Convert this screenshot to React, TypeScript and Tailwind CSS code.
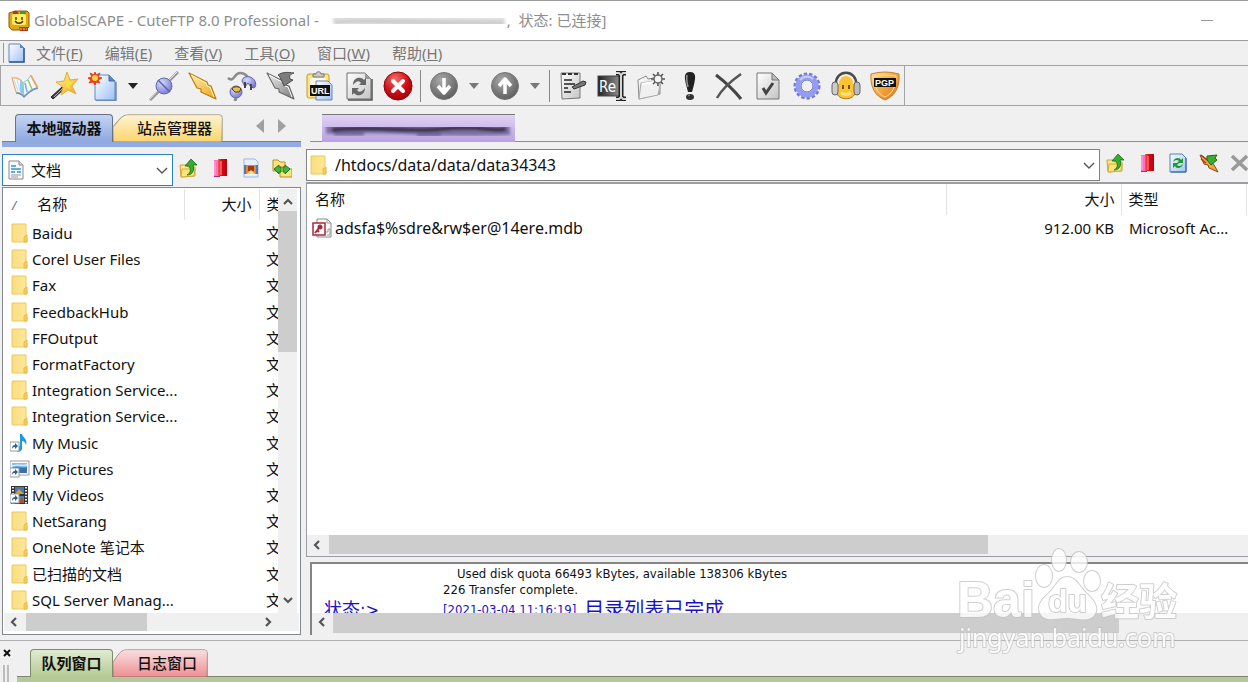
import React from 'react';

const toolbarMain = ['book', 'wand', 'newdoc'];
const toolbarLinks = ['connect', 'bolt', 'plug', 'boltoff', 'url', 'refresh', 'stop'];
const toolbarTools = ['edit', 'rename', 'newfolder', 'bang', 'cross', 'check', 'gear', 'headset', 'pgp'];

const labels: Record<string, string> = {
  book: 'Site manager', wand: 'Wizard', newdoc: 'New', connect: 'Connect', bolt: 'Quick connect',
  plug: 'Reconnect', boltoff: 'Disconnect', url: 'Paste URL', refresh: 'Refresh', stop: 'Stop',
  down: 'Download', up: 'Upload', edit: 'Edit', rename: 'Rename', newfolder: 'New folder',
  bang: 'Execute', cross: 'Delete', check: 'Properties', gear: 'Options', headset: 'Support', pgp: 'PGP',
};

const menus = [
  ['文件', 'F'], ['编辑', 'E'], ['查看', 'V'], ['工具', 'O'], ['窗口', 'W'], ['帮助', 'H'],
];

const localFiles = [
  { name: 'Baidu', icon: 'folder' },
  { name: 'Corel User Files', icon: 'folder' },
  { name: 'Fax', icon: 'folder' },
  { name: 'FeedbackHub', icon: 'folder' },
  { name: 'FFOutput', icon: 'folder' },
  { name: 'FormatFactory', icon: 'folder' },
  { name: 'Integration Service...', icon: 'folder' },
  { name: 'Integration Service...', icon: 'folder' },
  { name: 'My Music', icon: 'music' },
  { name: 'My Pictures', icon: 'pictures' },
  { name: 'My Videos', icon: 'videos' },
  { name: 'NetSarang', icon: 'folder' },
  { name: 'OneNote 笔记本', icon: 'folder' },
  { name: '已扫描的文档', icon: 'folder' },
  { name: 'SQL Server Manag...', icon: 'folder' },
];

// Shared gradients, referenced by id from every icon
const Defs = () => (
  <svg className="absolute w-0 h-0" aria-hidden="true">
    <defs>
      <linearGradient id="page" x1="0" y1="0" x2="1" y2="1">
        <stop offset="0" stopColor="#fff" /><stop offset="1" stopColor="#9cc0f5" />
      </linearGradient>
      <linearGradient id="greypage" x1="0" y1="0" x2="1" y2="1">
        <stop offset="0" stopColor="#fff" /><stop offset="1" stopColor="#c4c4c4" />
      </linearGradient>
      <linearGradient id="gold" x1="0" y1="0" x2="1" y2="1">
        <stop offset="0" stopColor="#fff3a8" /><stop offset="1" stopColor="#f0a21c" />
      </linearGradient>
      <linearGradient id="steel" x1="0" y1="0" x2="1" y2="1">
        <stop offset="0" stopColor="#f4f4f4" /><stop offset="1" stopColor="#777" />
      </linearGradient>
      <linearGradient id="dark" x1="0" y1="0" x2="1" y2="0">
        <stop offset="0" stopColor="#222" /><stop offset="1" stopColor="#999" />
      </linearGradient>
      <radialGradient id="ball" cx="0.4" cy="0.3" r="0.8">
        <stop offset="0" stopColor="#aaa" /><stop offset="1" stopColor="#555" />
      </radialGradient>
      <radialGradient id="red" cx="0.4" cy="0.25" r="0.8">
        <stop offset="0" stopColor="#f46a6a" /><stop offset="0.6" stopColor="#cc0c14" /><stop offset="1" stopColor="#9a0008" />
      </radialGradient>
      <radialGradient id="violet" cx="0.35" cy="0.3" r="0.8">
        <stop offset="0" stopColor="#d8dbfb" /><stop offset="1" stopColor="#7074cf" />
      </radialGradient>
      <linearGradient id="shield" x1="0" y1="0" x2="1" y2="1">
        <stop offset="0" stopColor="#ffe0a0" /><stop offset="0.5" stopColor="#f5a63c" /><stop offset="1" stopColor="#d9701c" />
      </linearGradient>
      <linearGradient id="crimson" x1="0" y1="0" x2="1" y2="0">
        <stop offset="0" stopColor="#ff5a50" /><stop offset="0.4" stopColor="#d80a18" /><stop offset="1" stopColor="#b80010" />
      </linearGradient>
      <linearGradient id="folderfill" x1="0" y1="0" x2="1" y2="0">
        <stop offset="0" stopColor="#f9dd83" /><stop offset="1" stopColor="#ffe899" />
      </linearGradient>
      <filter id="soft"><feGaussianBlur stdDeviation="1.6" /></filter>
    </defs>
  </svg>
);

const toolIcons: Record<string, React.ReactNode> = {
  book: (
    <>
      <path d="M2 7Q9 6 13 12l1 13Q10 21 6 21z" fill="#fff" stroke="#f0a860" strokeWidth="1.2" />
      <path d="M13 12Q19 9 21 4l7 12Q20 18 14 25z" fill="#f4faff" stroke="#9fb8d0" />
      <path d="m10 9 3 3 1 12-4-3z" fill="#8cc9ef" />
      <path d="m4 9 4 11M7 9l3 11" stroke="#b9dff6" strokeWidth="1.2" />
      <path d="m21 5 6 11" stroke="#f0a860" strokeWidth="1.6" />
      <path d="m18 9 4 9" stroke="#8dce6c" strokeWidth="1.5" />
      <path d="m15 12 2 9" stroke="#6cb3e4" strokeWidth="1.5" />
      <path d="M6 22q5 0 8 4 6-7 14-9" fill="none" stroke="#6f93bd" strokeWidth="1.3" />
    </>
  ),
  wand: (
    <>
      <path d="m2 26 11-10 2 2L4 28z" fill="#444" stroke="#222" />
      <path d="m5 26 8-8" stroke="#aaa" />
      <path d="m18 1 3 8 8-1-6 7 4 8-8-4-7 5 2-8-7-5 8-1z" fill="url(#gold)" stroke="#e3b227" strokeWidth="1" />
      <path d="m18 3 2 8 6-1-6 5 2 4-5-4z" fill="#ffdf39" />
    </>
  ),
  newdoc: (
    <>
      <path d="M7 4h14l6 6v19H7z" fill="url(#page)" stroke="#6289c2" />
      <path d="M21 4v6h6" fill="#5b84c9" stroke="#426cae" />
      <path d="M28 11v19H8" fill="none" stroke="#345a94" />
      <path d="m7 1 1 3 4-2-2 4 4 1-4 2 2 3-4-1-1 3-2-3-4 1 2-3-3-2 4-1-2-4 4 2z" fill="#e8401b" stroke="#e8401b" />
      <circle cx="7" cy="7" r="3" fill="#ffd14a" />
    </>
  ),
  connect: (
    <>
      <path d="M29 1 20 10M10 20 1 29" stroke="#9a9a9a" strokeWidth="3" />
      <path d="M28 1 19 10M9 19 1 28" stroke="#e5e5e5" />
      <circle cx="15" cy="15" r="8" fill="url(#violet)" stroke="#6569b4" />
      <path d="m9 9 12 12" stroke="#5c60b0" strokeWidth="1.5" />
    </>
  ),
  bolt: (
    <>
      <path d="m1 2 18 9 1 3 3 1 5 13-15-7v-3l-4-1z" fill="url(#gold)" stroke="#b97b10" strokeWidth="1.2" strokeLinejoin="round" />
      <path d="m3 4 15 8 1 3 3 1 4 10" fill="none" stroke="#fff6c8" />
    </>
  ),
  plug: (
    <>
      <path d="M1 7c6 5 6-5 12-5s6 3 8 4" fill="none" stroke="#8c8c8c" strokeWidth="2.5" />
      <path d="M15 10c0-4 6-6 10-3 4 2 5 8 2 10l-3-1-3-4-3 4z" fill="url(#violet)" stroke="#5e62ae" />
      <path d="m18 11 0 6M24 13l0 6" stroke="#444" strokeWidth="2" />
      <circle cx="9" cy="21" r="6" fill="url(#violet)" stroke="#5e62ae" />
      <path d="M5 18c1-3 8-3 9 0l-2 3H8z" fill="#f0bd3f" stroke="#493b18" />
      <path d="m9 27-1 3" stroke="#888" strokeWidth="3" />
    </>
  ),
  boltoff: (
    <>
      <path d="m1 2 18 9 1 3 3 1 5 13-15-7v-3l-4-1z" fill="url(#steel)" stroke="#666" strokeWidth="1.1" strokeLinejoin="round" />
      <path d="m3 4 15 8 1 3 3 1 4 10" fill="none" stroke="#fff" />
      <path d="M12 4c4-3 9-3 16-2-4 1-5 3-4 6l3 1-9 6-4-9z" fill="#7d7d7d" stroke="#4e4e4e" strokeLinejoin="round" />
    </>
  ),
  url: (
    <>
      <rect x="2" y="3" width="22" height="24" rx="2" fill="#ffe57a" stroke="#c49a2f" />
      <rect x="5" y="7" width="16" height="17" fill="#fffbe2" />
      <path d="M8 6V3h3c0-3 5-3 5 0h3v3z" fill="#ccc" stroke="#777" />
      <path d="M11 10h12l4 4v15H11z" fill="url(#page)" stroke="#5f86c4" />
      <rect x="5" y="14" width="20" height="11" fill="#111" />
      <text x="6" y="23" fontSize="9" fontWeight="700" fontFamily="Liberation Sans, sans-serif" fill="#fff">URL</text>
    </>
  ),
  refresh: (
    <>
      <path d="M3 2h18l6 6v20H3z" fill="url(#greypage)" stroke="#707070" />
      <path d="M28 8v21H4" fill="none" stroke="#555" strokeWidth="1.5" />
      <path d="M21 2v6h6" fill="#999" />
      <path d="M9 14c0-8 8-9 11-5l2-2v7h-7l2-2c-2-3-5-2-8 2z" fill="#666" />
      <path d="M21 17c0 8-8 9-11 5l-2 2v-7h7l-2 2c2 3 5 2 8-2z" fill="#666" />
    </>
  ),
  stop: (
    <>
      <circle cx="15" cy="15" r="14" fill="url(#red)" stroke="#8c0008" />
      <path d="m10 10 10 10M20 10 10 20" stroke="#fff" strokeWidth="4" strokeLinecap="round" />
    </>
  ),
  down: (
    <>
      <circle cx="15" cy="15" r="13.5" fill="url(#ball)" stroke="#777" />
      <path d="M15 7v14M9 15l6 7 6-7" fill="none" stroke="#fff" strokeWidth="3.5" strokeLinejoin="round" />
    </>
  ),
  up: (
    <>
      <circle cx="15" cy="15" r="13.5" fill="url(#ball)" stroke="#777" />
      <path d="M15 23V9M9 15l6-7 6 7" fill="none" stroke="#fff" strokeWidth="3.5" strokeLinejoin="round" />
    </>
  ),
  edit: (
    <>
      <path d="M3 2h19v25l-18 1z" fill="url(#greypage)" stroke="#777" />
      <path d="M4 3h17" stroke="#333" strokeWidth="2" strokeDasharray="4 2" />
      <path d="M6 9h8M6 13h11M6 17h4M6 21h7" stroke="#222" strokeWidth="1.7" />
      <path d="m14 16 11-6 3 1-1 3-11 4z" fill="#777" stroke="#333" />
    </>
  ),
  rename: (
    <>
      <rect x="1" y="5" width="24" height="20" fill="url(#dark)" stroke="#444" />
      <text x="2" y="21" fontSize="15" fontFamily="DejaVu Sans Condensed, sans-serif" fill="#fff">Re</text>
      <path d="M19 2h3l2 2 2-2h3M24 4v22M19 28h3l2-2 2 2h3" fill="none" stroke="#222" strokeWidth="5" />
      <path d="M19 2h3l2 2 2-2h3M24 4v22M19 28h3l2-2 2 2h3" fill="none" stroke="#d5d5d5" strokeWidth="2" />
    </>
  ),
  newfolder: (
    <>
      <path d="m2 9 8-4 2 3 12-2v17L3 28z" fill="url(#greypage)" stroke="#8a8a8a" />
      <path d="m3 28 2-16 20-3-3 15z" fill="#f0f0f0" stroke="#aaa" />
      <path d="m6 13 18-3" stroke="#fff" strokeWidth="2" />
      <path d="M22 1v14M15 8h14M17 3l10 10M27 3 17 13" stroke="#555" strokeWidth="1.6" />
      <circle cx="22" cy="8" r="4" fill="#f4f4f4" stroke="#666" strokeWidth="1.5" />
    </>
  ),
  bang: (
    <>
      <path d="M15 1c7 0 6 6 2 20h-4C9 7 8 1 15 1z" fill="#222" />
      <path d="M12 4c-1 4 0 8 1 12" fill="none" stroke="#999" strokeWidth="1.5" />
      <ellipse cx="15" cy="26" rx="4" ry="3" fill="#333" />
      <path d="m13 25 2-1" stroke="#999" />
    </>
  ),
  cross: (
    <>
      <path d="M2 4c8 6 17 14 25 24" fill="none" stroke="#444" strokeWidth="3" />
      <path d="M27 3C17 10 8 18 3 27" fill="none" stroke="#555" strokeWidth="2.5" />
    </>
  ),
  check: (
    <>
      <path d="M4 2h15l7 7v19H4z" fill="url(#greypage)" stroke="#777" />
      <path d="M19 2v7h7z" fill="#bbb" stroke="#777" />
      <path d="m10 17 3 5 7-10" fill="none" stroke="#444" strokeWidth="3" />
    </>
  ),
  gear: (
    <>
      <circle cx="15" cy="15" r="12" fill="none" stroke="#6f76d2" strokeWidth="3" strokeDasharray="3.3 2" />
      <circle cx="15" cy="15" r="9" fill="none" stroke="#949cf2" strokeWidth="5" />
      <path d="M8 9a9 9 0 0 1 13-1" fill="none" stroke="#c9cdfc" strokeWidth="2" />
      <circle cx="15" cy="15" r="6" fill="#efefef" stroke="#666cc6" />
    </>
  ),
  headset: (
    <>
      <path d="M6 13c0-15 18-15 18 0v8c0 9-18 9-18 0z" fill="#fbc334" stroke="#a8731a" />
      <path d="M5 14C4-2 26-2 25 14" fill="none" stroke="#4b4b4b" strokeWidth="3" />
      <path d="M7 13C7 1 23 1 23 13" fill="none" stroke="#eee" strokeWidth="2" />
      <rect x="1" y="11" width="6" height="13" rx="3" fill="#ccc" stroke="#666" />
      <rect x="23" y="11" width="6" height="13" rx="3" fill="#bbb" stroke="#666" />
      <path d="M12 14v4M18 14v4" stroke="#4a2b08" strokeWidth="1.5" />
      <path d="M10 22q5 3 10 0" fill="none" stroke="#ffe382" strokeWidth="3" />
    </>
  ),
  pgp: (
    <>
      <path d="M1 3q14-4 28 0c1 13-4 22-14 26C5 25 0 16 1 3z" fill="url(#shield)" stroke="#c4812d" />
      <path d="M4 5q11-2 22 0c0 11-4 18-11 21C8 23 4 16 4 5z" fill="none" stroke="#ffe3a1" />
      <rect x="4" y="7" width="22" height="9" fill="#111" />
      <text x="5" y="15" fontSize="9" fontWeight="700" fontFamily="Liberation Sans, sans-serif" fill="#fff">PGP</text>
    </>
  ),
};

const smallIcons: Record<string, React.ReactNode> = {
  folder: (
    <>
      <path d="M2 1h14v14h1v4H2z" fill="url(#folderfill)" stroke="#ecc95b" />
      <path d="M14 19v-5l3-2v7z" fill="#f5cf5f" stroke="#e6bb43" />
    </>
  ),
  music: (
    <>
      <path d="M10 1h2c1 4 6 5 4 11-1-3-2-4-4-4v8c-1 4-7 3-6 0 0-2 2-3 4-3z" fill="#1d9be2" />
      <rect x="0" y="9" width="9" height="9" fill="#fff" stroke="#999" />
      <path d="M2 16c0-3 1-4 3-4v-2l3 3-3 3v-2c-1 0-2 0-3 2z" fill="#245f9f" />
    </>
  ),
  pictures: (
    <>
      <rect x="0" y="2" width="19" height="14" fill="#fff" stroke="#9b9b9b" />
      <rect x="2" y="4" width="15" height="10" fill="#85bdec" />
      <path d="M2 9c6-3 9 1 15-1v6H2z" fill="#3a71aa" />
      <path d="M2 7c5-2 10 0 15-1" stroke="#fff" fill="none" />
      <rect x="0" y="9" width="9" height="9" fill="#fff" stroke="#999" />
      <path d="M2 16c0-3 1-4 3-4v-2l3 3-3 3v-2c-1 0-2 0-3 2z" fill="#245f9f" />
    </>
  ),
  videos: (
    <>
      <rect x="1" y="1" width="17" height="18" fill="#333" />
      <path d="M3 2v17M16 2v17" stroke="#eee" strokeWidth="2" strokeDasharray="1.5 1.5" />
      <rect x="5" y="2" width="9" height="7" fill="#4577c2" /><path d="m5 9 4-5 5 5z" fill="#d2a32c" />
      <rect x="5" y="11" width="9" height="7" fill="#617c9d" /><path d="m9 18 3-6 2 6z" fill="#a85231" />
      <rect x="0" y="9" width="9" height="9" fill="#fff" stroke="#999" />
      <path d="M2 16c0-3 1-4 3-4v-2l3 3-3 3v-2c-1 0-2 0-3 2z" fill="#245f9f" />
    </>
  ),
  access: (
    <>
      <path d="M5 1h10l4 4v14H5z" fill="#fff" stroke="#888" />
      <path d="M15 1v4h4M13 14h3v-3h2v6h-3" fill="none" stroke="#999" />
      <rect x="1" y="5" width="12" height="12" fill="#fff" stroke="#a52a3a" strokeWidth="1.5" />
      <circle cx="8" cy="9" r="2.5" fill="#a52a3a" /><path d="m7 10-4 5M5 12l2 2" stroke="#a52a3a" strokeWidth="2" />
    </>
  ),
  doc: (
    <>
      <path d="M3 1h10l4 4v14H3z" fill="#f8fbff" stroke="#888" />
      <path d="M13 1v4h4" fill="#ddd" stroke="#888" />
      <path d="M5 6h5M5 9h10M5 12h4M11 12h4" stroke="#2c96d4" strokeWidth="1.6" />
      <path d="M5 15h10M5 17h7" stroke="#999" />
    </>
  ),
  upfolder: (
    <>
      <path d="M1 7h6l2 2h7v9l-14 1z" fill="#ffe78b" stroke="#c9a437" />
      <path d="m2 19 1-8h13l-1 7z" fill="#ffe27a" stroke="#d3ab3c" />
      <path d="M8 17c4-2 4-6 2-9H6l6-7 6 6h-4c2 6-1 10-6 10z" fill="#35ad2e" stroke="#147018" strokeWidth="0.8" />
    </>
  ),
  bookmark: (
    <>
      <path d="M4 2h5v17H4z" fill="#ff70c4" /><path d="M8 1h9v17H8z" fill="url(#crimson)" />
      <path d="M4 18h6v1H4z" fill="#ad2f70" /><path d="M11 3v14" stroke="#ff9790" />
      <path d="M5 3v14" stroke="#ffb1e1" />
    </>
  ),
  picfile: (
    <>
      <path d="M3 1h11l3 3v15H3z" fill="#e6f1ff" stroke="#9bb6dc" />
      <rect x="4" y="7" width="12" height="9" fill="#e28a32" /><rect x="7" y="8" width="6" height="5" fill="#a43822" />
      <path d="M4 7v9M16 7v9" stroke="#4a79bd" strokeWidth="2" />
      <path d="m6 16 4-4 4 4z" fill="#ffdf72" />
    </>
  ),
  sync: (
    <>
      <path d="M1 2h5l2 2h5v9H1z" fill="#ffe47b" stroke="#b98d27" />
      <path d="M8 9h5l2 2h5v8H8z" fill="#ffe47b" stroke="#b98d27" />
      <path d="m2 11 5-4v2h2v5H7v2zM18 11l-5-4v2h-2v5h2v2z" fill="#46b63b" stroke="#1b7b22" />
    </>
  ),
  reload: (
    <>
      <path d="M2 1h12l4 4v14H2z" fill="url(#page)" stroke="#5481bd" />
      <path d="M18 5v14H3" fill="none" stroke="#315f9b" />
      <path d="M5 9c1-5 7-5 8-2l2-2v5H9l2-2c-2-2-4-1-6 1zM15 11c-1 5-7 5-8 2l-2 2v-5h6l-2 2c2 2 4 1 6-1z" fill="#1e9a35" />
    </>
  ),
  redbolt: (
    <>
      <path d="m1 2 12 7 2 3 4 7-9-4-1-3-4-1z" fill="#eea83a" stroke="#8e461c" />
      <path d="m8 3 10-1-2 3 2 2-6 5-4-5z" fill="#3aac32" stroke="#176b1a" />
      <path d="m2 2 6 5M2 6l5 4" stroke="#b8351c" strokeWidth="1.5" fill="none" />
    </>
  ),
  greyx: <path d="m2 3 15 14M17 3 2 17" stroke="#999" strokeWidth="3.5" />,
};

const SmallIcon = ({ name }: { name: string }) => (
  <svg viewBox="0 0 20 20" className="w-5 h-5 shrink-0" aria-hidden="true">{smallIcons[name]}</svg>
);

const ToolButton = ({ name }: { name: string }) => (
  <button aria-label={labels[name]} className="w-[39px] h-9 flex items-center justify-center shrink-0">
    <svg viewBox="0 0 30 30" className="w-[30px] h-[30px]" aria-hidden="true">{toolIcons[name]}</svg>
  </button>
);

const DropArrow = ({ color }: { color: string }) => (
  <button aria-label="More" className="w-[22px] h-9 flex items-center justify-center shrink-0">
    <svg viewBox="0 0 10 6" className="w-2.5 h-1.5"><path d="M0 0h10L5 6z" fill={color} /></svg>
  </button>
);

const Chevron = ({ d, label }: { d: string; label: string }) => (
  <button aria-label={label} className="w-5 h-[18px] flex items-center justify-center shrink-0">
    <svg viewBox="0 0 10 10" className="w-2.5 h-2.5"><path d={d} fill="none" stroke="#555" strokeWidth="2.2" /></svg>
  </button>
);

const LEFT = 'M7 1 3 5l4 4';
const RIGHT = 'm3 1 4 4-4 4';
const UP = 'm1 7 4-4 4 4';
const DOWN = 'm1 3 4 4 4-4';

const ComboArrow = () => (
  <svg viewBox="0 0 12 8" className="absolute right-1 top-3 w-3 h-2 pointer-events-none" aria-hidden="true">
    <path d="m1 1 5 5 5-5" fill="none" stroke="#555" strokeWidth="1.4" />
  </svg>
);

// First tab of a strip is square, the next one has the slanted left edge
const SlantTab = ({ label, fill, line }: { label: string; fill: string; line: string }) => (
  <button className="relative h-7 flex items-center">
    <svg viewBox="0 0 110 28" preserveAspectRatio="none" className="absolute inset-0 w-full h-full" aria-hidden="true">
      <defs>
        <linearGradient id={`tab-${line.slice(1)}`} x1="0" y1="0" x2="0" y2="1">
          <stop offset="0" stopColor="#fff" stopOpacity="0.7" /><stop offset="1" stopColor="#fff" stopOpacity="0" />
        </linearGradient>
      </defs>
      <path d="M0 28V13C5 8 8 1 15 1h91q3 0 3 3v24z" fill={fill} stroke={line} />
      <path d="M0 28V13C5 8 8 1 15 1h91q3 0 3 3v24z" fill={`url(#tab-${line.slice(1)})`} />
    </svg>
    <span className="relative pl-6 pr-[11px]">{label}</span>
  </button>
);

const LocalPane = () => (
  <section className="w-[306px] shrink-0 pl-0.5 pr-[5px] pt-2 pb-[5px] flex flex-col">
    <div className="flex h-7 text-[15px] font-medium border-b border-[#6d7fa8] pl-[13px]">
      <button className="h-7 w-[98px] rounded-t border border-b-0 border-[#66718c] bg-linear-to-b from-[#c5d3f3] to-[#8ea9e0] font-bold">
        本地驱动器
      </button>
      <SlantTab label="站点管理器" fill="#fdd56b" line="#8b8058" />
      <div className="flex items-center gap-3.5 pl-[33px] pb-1">
        <button aria-label="Previous tab"><svg viewBox="0 0 8 14" className="w-2 h-3.5"><path d="M8 0v14L0 7z" fill="#a0a0a0" /></svg></button>
        <button aria-label="Next tab"><svg viewBox="0 0 8 14" className="w-2 h-3.5"><path d="M0 0v14l8-7z" fill="#a0a0a0" /></svg></button>
      </div>
    </div>
    <div className="h-[5px] bg-[#92abe1]"></div>
    <div className="flex items-center mt-[7px]">
      <label className="relative flex items-center h-8 w-[171px] pl-[3px] bg-white border border-[#2a83b8]">
        <SmallIcon name="doc" />
        <select aria-label="Folder" className="appearance-none flex-1 min-w-0 pl-[5px] bg-transparent text-[15px]">
          <option>文档</option>
        </select>
        <ComboArrow />
      </label>
      <div className="flex gap-[11px] pl-1.5 pb-1">
        <button aria-label="Up one level"><SmallIcon name="upfolder" /></button>
        <button aria-label="Bookmarks"><SmallIcon name="bookmark" /></button>
        <button aria-label="View"><SmallIcon name="picfile" /></button>
        <button aria-label="Synchronize"><SmallIcon name="sync" /></button>
      </div>
    </div>
    <div className="flex-1 min-h-0 mt-px flex flex-col bg-white border border-[#828790] p-px pb-[3px]">
      <div className="flex flex-1 min-h-0">
        <div className="flex-1 min-w-0 overflow-hidden">
          <table className="w-full h-full table-fixed text-[15px]">
            <thead>
              <tr className="h-[31px]">
                <th className="w-[180px] font-normal text-left border-r border-[#e3e3e3]">
                  <span className="pl-2 text-xs italic text-[#666]">/</span><span className="pl-[21px]">名称</span>
                </th>
                <th className="w-[75px] font-normal text-right pr-[7px] border-r border-[#e3e3e3]">大小</th>
                <th className="font-normal text-left pl-[7px] overflow-hidden whitespace-nowrap">类</th>
              </tr>
            </thead>
            <tbody>
              {localFiles.map((file, index) => (
                <tr key={index}>
                  <td>
                    <div className="flex items-center gap-0.5 pl-1.5 leading-5 whitespace-nowrap">
                      <SmallIcon name={file.icon} />
                      {file.name}
                    </div>
                  </td>
                  <td></td>
                  <td className="pl-[7px] leading-5 overflow-hidden whitespace-nowrap">文</td>
                </tr>
              ))}
            </tbody>
          </table>
        </div>
        <div className="w-[19px] mr-0.5 flex flex-col items-center bg-[#f0f0f0]">
          <div className="h-[22px] pt-1"><Chevron d={UP} label="Scroll up" /></div>
          <div className="w-full h-[141px] bg-[#cdcdcd]"></div>
          <div className="mt-auto pb-1"><Chevron d={DOWN} label="Scroll down" /></div>
        </div>
      </div>
      <div className="h-[18px] flex items-center bg-[#f0f0f0] pr-[21px]">
        <Chevron d={LEFT} label="Scroll left" />
        <div className="ml-0.5 w-[121px] h-full bg-[#cdcdcd]"></div>
        <div className="ml-auto"><Chevron d={RIGHT} label="Scroll right" /></div>
      </div>
    </div>
  </section>
);

const RemotePane = () => (
  <section className="flex-1 min-w-0 pt-2 pb-[5px] flex flex-col">
    <div className="h-7 ml-1 border-b border-[#8f8f8f]">
      <button aria-label="Remote site" className="block ml-3 w-[193px] h-7 border-t border-[#777] bg-linear-to-b from-[#dfd3f5] to-[#b9a1e2]">
        <svg viewBox="0 0 193 26" className="w-full h-[26px]" aria-hidden="true">
          <g filter="url(#soft)" fill="none">
            <path d="M4 13c50-3 120 4 184 1" stroke="#7d6f9c" strokeWidth="10" />
            <path d="M10 14c40-5 70 3 110-1s50 3 64 0" stroke="#2c2440" strokeWidth="4" />
            <path d="M12 18h30M95 19h24" stroke="#6f6092" strokeWidth="3" />
          </g>
        </svg>
      </button>
    </div>
    <div className="flex items-center mt-[7px]">
      <label className="relative flex flex-1 items-center h-8 pl-0.5 bg-white border border-[#828282]">
        <SmallIcon name="folder" />
        <select aria-label="Remote path" className="appearance-none flex-1 min-w-0 pl-1.5 bg-transparent text-base">
          <option>/htdocs/data/data/data34343</option>
        </select>
        <ComboArrow />
      </label>
      <div className="flex gap-[11px] pl-1.5 pb-1 w-[148px] overflow-hidden">
        <button className="shrink-0" aria-label="Up one level"><SmallIcon name="upfolder" /></button>
        <button className="shrink-0" aria-label="Bookmarks"><SmallIcon name="bookmark" /></button>
        <button className="shrink-0" aria-label="Reload"><SmallIcon name="reload" /></button>
        <button className="shrink-0" aria-label="Disconnect"><SmallIcon name="redbolt" /></button>
        <button className="shrink-0" aria-label="Close"><SmallIcon name="greyx" /></button>
      </div>
    </div>
    <div className="flex-1 min-h-0 mt-px flex flex-col bg-white border-l border-b border-t-2 border-[#9a9da2]">
      <div className="flex-1 min-h-0">
        <table className="w-full table-fixed text-[15px]">
          <thead>
            <tr className="h-[31px]">
              <th className="font-normal text-left pl-2 border-r border-[#e3e3e3]">名称</th>
              <th className="w-[175px] font-normal text-right pr-1.5 border-r border-[#e3e3e3]">大小</th>
              <th className="w-[125px] font-normal text-left pl-[7px] border-r border-[#e3e3e3]">类型</th>
              <th className="w-0.5"></th>
            </tr>
          </thead>
          <tbody>
            <tr className="h-[26px]">
              <td>
                <div className="flex items-center gap-[3px] pl-[5px] text-base leading-5">
                  <SmallIcon name="access" />
                  adsfa$%sdre&amp;rw$er@14ere.mdb
                </div>
              </td>
              <td className="text-right pr-[7px]">912.00 KB</td>
              <td className="pl-2 whitespace-nowrap">Microsoft Ac...</td>
              <td></td>
            </tr>
          </tbody>
        </table>
      </div>
      <div className="flex items-center h-[21px] pb-0.5 bg-[#f0f0f0]">
        <Chevron d={LEFT} label="Scroll left" />
        <div className="ml-0.5 w-[70%] h-full bg-[#cdcdcd]"></div>
      </div>
    </div>
    <div className="mt-[5px] ml-1 h-[73px] shrink-0 flex flex-col bg-white border-t-2 border-l-2 border-[#858585]">
      <div className="flex-1 min-h-0 overflow-hidden pt-0.5 font-['DejaVu_Sans_Condensed','Noto_Sans_CJK_SC',sans-serif] text-[13px] leading-4">
        <p className="pl-[145px]">Used disk quota 66493 kBytes, available 138306 kBytes</p>
        <p className="pl-[131px]">226 Transfer complete.</p>
        <p className="flex items-center h-6 pl-3 text-[#1a12c8]">
          <span className="w-[119px] text-lg leading-6">状态:&gt;</span>
          <span className="text-[13px]">[2021-03-04 11:16:19]</span>
          <span className="pl-2 text-xl leading-6">目录列表已完成</span>
        </p>
      </div>
      <div className="flex items-start h-[22px] pb-0.5 bg-[#f0f0f0]">
        <Chevron d={LEFT} label="Scroll left" />
        <div className="ml-px w-[84%] h-full bg-[#cdcdcd]"></div>
      </div>
    </div>
  </section>
);

const Watermark = () => (
  <svg viewBox="0 0 230 114" className="absolute right-16 bottom-6 w-[230px] h-[114px] pointer-events-none" aria-hidden="true">
    <g fill="#fff" stroke="#c4c4c4" strokeWidth="2" strokeLinejoin="round" paintOrder="stroke" opacity="0.8">
      <text x="3" y="73" fontSize="50" fontWeight="700" fontFamily="Liberation Sans, sans-serif">Bai</text>
      <ellipse cx="90" cy="32" rx="8" ry="11" />
      <ellipse cx="105" cy="16" rx="7" ry="11" />
      <ellipse cx="125" cy="18" rx="8" ry="10" />
      <ellipse cx="138" cy="37" rx="8" ry="10" />
      <path d="M113 33c9 0 12 9 19 16 8 7 13 14 9 21-5 9-17 4-28 4s-21 4-26-3c-5-8 0-15 7-21 8-7 10-17 19-17z" />
      <text x="94" y="68" fontSize="32" fontWeight="700" fontFamily="Liberation Sans, sans-serif">du</text>
      <text x="147" y="71" fontSize="38" fontWeight="700" fontFamily="Noto Sans CJK SC, sans-serif">经验</text>
      <text x="5" y="103" fontSize="25" fontFamily="Noto Sans, sans-serif">jingyan.baidu.com</text>
    </g>
  </svg>
);

const App = () => {
  return (
    <div className="relative h-screen flex flex-col overflow-hidden bg-[#f0f0f0] text-[#111] font-['Noto_Sans','Noto_Sans_CJK_SC',sans-serif]">
      <Defs />
      <header className="h-[41px] shrink-0 flex items-center pl-2 bg-white border-t border-b border-[#9b9b9b] text-[15px] text-[#8e8e8e] whitespace-nowrap">
        <svg viewBox="0 0 22 22" className="w-[22px] h-[22px]" aria-hidden="true">
          <path d="m1 3 6-2h12l2 2v14l-3 3H4l-3-3z" fill="#e3a819" stroke="#92570c" />
          <path d="M5 1h4l2 3H5z" fill="#c92b20" /><path d="M12 1h6v3h-6z" fill="#3d9a36" />
          <rect x="4" y="4" width="14" height="11" rx="2" fill="#ffec61" />
          <path d="M8 7v3M14 7v3M7 11c2 3 6 3 8 0" fill="none" stroke="#503305" strokeWidth="1.4" />
          <path d="M11 17h9v4h-8z" fill="#b33a16" /><path d="M12 19h7" stroke="#ffd058" strokeDasharray="2 1" />
        </svg>
        <h1 className="pl-1">GlobalSCAPE - CuteFTP 8.0 Professional -</h1>
        <svg viewBox="0 0 176 20" className="ml-3 w-[176px] h-5" aria-hidden="true">
          <g filter="url(#soft)" fill="none">
            <path d="M2 9c30-3 60 3 90 2s50 1 82 0" stroke="#ddd" strokeWidth="10" />
            <path d="M4 12c50-4 110 1 168 0" stroke="#c8c8c8" strokeWidth="3" />
          </g>
        </svg>
        <span>,&nbsp; 状态: 已连接]</span>
        <button aria-label="Minimize" className="ml-auto mr-[35px] w-3 h-5 flex items-center">
          <span className="block w-3 h-px bg-[#999]"></span>
        </button>
      </header>
      <nav className="h-[25px] shrink-0 flex items-center pl-[3px] border-b border-[#a5a5a5] text-[15px] text-[#777]">
        <span className="w-px h-5 bg-[#999]"></span>
        <svg viewBox="0 0 20 20" className="ml-[3px] w-5 h-5" aria-hidden="true">
          <path d="M2 1h11l4 4v14H2z" fill="url(#page)" stroke="#6085bf" />
          <path d="M13 1v4h4" fill="#5b84c9" /><path d="M17 5v14H2" fill="none" stroke="#345a94" strokeWidth="1.5" />
        </svg>
        <div className="flex gap-[22px] pl-[9px]">
          {menus.map(([label, key]) => (
            <button key={key}>{label}(<span className="underline">{key}</span>)</button>
          ))}
        </div>
      </nav>
      <div className="h-10 shrink-0 border-b border-[#a5a5a5]">
        <div className="inline-flex items-center h-[39px] pl-1 border-l border-r border-[#a5a5a5]">
          {toolbarMain.map((name) => <ToolButton key={name} name={name} />)}
          <DropArrow color="#222" />
          {toolbarLinks.map((name) => <ToolButton key={name} name={name} />)}
          <span className="mx-[3px] w-px h-8 bg-[#888]"></span>
          <ToolButton name="down" />
          <DropArrow color="#777" />
          <ToolButton name="up" />
          <DropArrow color="#777" />
          <span className="mx-[3px] w-px h-8 bg-[#888]"></span>
          {toolbarTools.map((name) => <ToolButton key={name} name={name} />)}
        </div>
      </div>
      <main className="flex flex-1 min-h-0">
        <LocalPane />
        <RemotePane />
      </main>
      <footer className="h-[42px] shrink-0 flex border-t border-[#b0b0b0]">
        <div className="w-[17px] pl-[3px] pt-2 shrink-0">
          <button aria-label="Close panel" className="block">
            <svg viewBox="0 0 8 8" className="w-2 h-2"><path d="m1 1 6 6M7 1 1 7" stroke="#111" strokeWidth="2" /></svg>
          </button>
          <div className="mt-2 w-1.5 h-6 border-l-2 border-r-2 border-[#bdbdbd]"></div>
        </div>
        <div className="flex-1 flex flex-col pt-2">
          <div className="flex h-7 pl-[13px] text-[15px] font-medium border-b border-[#7f8574]">
            <button className="h-7 w-[83px] rounded-t border border-b-0 border-[#7e8a68] bg-linear-to-b from-[#e2ebd2] to-[#b5ca92] font-bold">
              队列窗口
            </button>
            <SlantTab label="日志窗口" fill="#ee8f92" line="#8b6668" />
          </div>
          <div className="flex-1 bg-[#b5c996]"></div>
        </div>
      </footer>
      <Watermark />
    </div>
  );
};

export default App;
